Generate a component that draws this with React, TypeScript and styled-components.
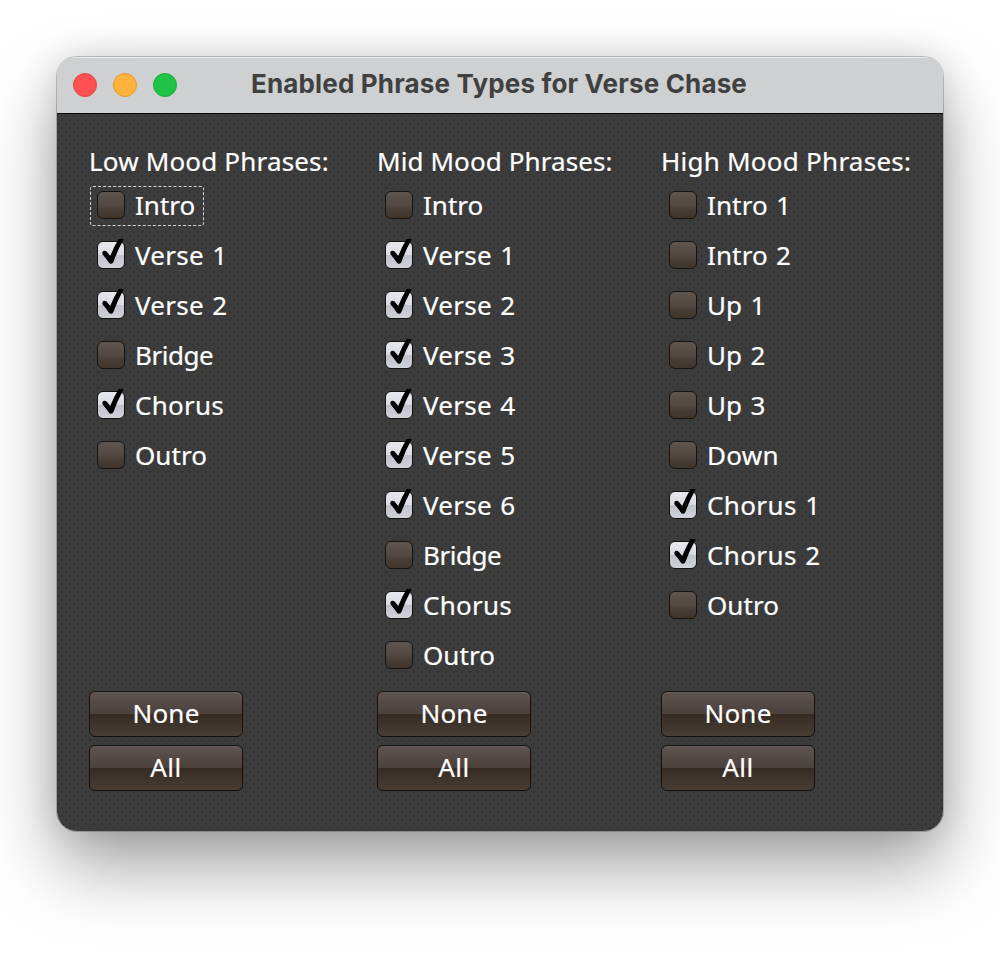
import React, { useState } from "react";
import styled, { createGlobalStyle, css } from "styled-components";

const GlobalStyle = createGlobalStyle`
  * { box-sizing: border-box; }
  html, body { margin: 0; padding: 0; background: #fff; }
  body { width: 1000px; height: 960px; overflow: hidden; }
`;

const Desktop = styled.main`
  width: 1000px;
  height: 960px;
  padding: 57px;
  overflow: hidden;
  background: #fff;
`;

const Window = styled.section`
  width: 886px;
  height: 774px;
  border-radius: 20px;
  overflow: hidden;
  display: flex;
  flex-direction: column;
  box-shadow:
    0 0 0 1px rgba(0, 0, 0, 0.2),
    0 36px 72px rgba(0, 0, 0, 0.36),
    0 0 36px rgba(0, 0, 0, 0.14);
`;

const TitleBar = styled.header`
  height: 57px;
  flex: none;
  display: grid;
  grid-template-columns: 178px 1fr;
  align-items: center;
  padding-left: 16px;
  background: #ced0d1;
  border-bottom: 1px solid #080808;
  box-shadow: inset 0 2px 0 -1px #ececec;
`;

const Lights = styled.div`
  display: flex;
  gap: 16px;
`;

const Light = styled.span<{ $fill: string; $edge: string }>`
  width: 24px;
  height: 24px;
  border-radius: 50%;
  background: ${(p) => p.$fill};
  border: 1px solid ${(p) => p.$edge};
`;

const Title = styled.h1`
  margin: 0 0 2px;
  font: 700 26px/32px Inter, sans-serif;
  letter-spacing: 0.16px;
  color: #404040;
  white-space: nowrap;
`;

const Panel = styled.div`
  flex: 1;
  padding: 31px 32px 0;
  display: grid;
  grid-template-columns: 288px 284px 1fr;
  color: #fff;
  font: 400 26px/32px "Noto Sans", sans-serif;
  -webkit-text-stroke: 0.2px #fff;
  background-color: #3c3c3c;
  background-image:
    radial-gradient(circle, #343434 0.6px, transparent 1.6px),
    radial-gradient(circle, #343434 0.6px, transparent 1.6px);
  background-size: 8px 8px;
  background-position: 1px 2px, 5px 6px;
`;

const Column = styled.div`
  display: flex;
  flex-direction: column;
  align-items: flex-start;
`;

const Heading = styled.h2<{ $track: number }>`
  margin: 0;
  height: 41px;
  font: inherit;
  white-space: nowrap;
  letter-spacing: ${(p) => p.$track}px;
`;

const Options = styled.div`
  height: 505px;
  display: flex;
  flex-direction: column;
  align-items: flex-start;
  gap: 10px;
`;

const Option = styled.button<{ $focused: boolean }>`
  height: 40px;
  margin-left: 1px;
  padding: 0 8px 2px 6px;
  display: flex;
  align-items: center;
  gap: 10px;
  border: 1px dashed ${(p) => (p.$focused ? "#d5d5d5" : "transparent")};
  border-radius: 3px;
  background: none;
  color: inherit;
  font: inherit;
  white-space: nowrap;
  outline: none;
`;

const Box = styled.span<{ $checked: boolean }>`
  flex: none;
  width: 28px;
  height: 28px;
  border: 1px solid #16120f;
  border-radius: 6px;
  ${(p) =>
    p.$checked
      ? css`
          background: linear-gradient(#e6e8ed 0%, #dadce1 49%, #bfc2c8 51%, #d0d3da 100%);
        `
      : css`
          background: linear-gradient(#5f554f 0%, #534842 50%, #453b32 75%, #40352b 100%);
        `}
`;

const Tick = styled.svg`
  display: block;
  overflow: visible;
`;

const Caption = styled.span<{ $track: number }>`
  letter-spacing: ${(p) => p.$track}px;
  word-spacing: 1.4px;
`;

const Actions = styled.div`
  display: flex;
  flex-direction: column;
  gap: 8px;
`;

const Action = styled.button<{ $track: number }>`
  width: 154px;
  height: 46px;
  padding: 0 0 3px;
  border: 1px solid #130e0a;
  border-radius: 6px;
  background: linear-gradient(#5f544f 0%, #4a413c 50%, #372c24 51%, #483d34 100%);
  box-shadow: inset 0 1px 1px #69605b;
  color: #fff;
  font: inherit;
  letter-spacing: ${(p) => p.$track}px;
`;

const tracking: Record<string, number> = {
  Intro: 0,
  Verse: 0.25,
  Bridge: -0.45,
  Chorus: 0.25,
  Outro: 0.05,
  Up: 0.1,
  Down: 0.3,
};

const trackFor = (label: string) => {
  const [word, number] = label.split(" ");
  const extra = number && (word === "Chorus" || word === "Intro") ? 0.12 : 0;
  return tracking[word] + extra;
};

const groups = [
  {
    title: "Low Mood Phrases:",
    track: 0.17,
    items: ["Intro", "Verse 1", "Verse 2", "Bridge", "Chorus", "Outro"],
    on: ["Verse 1", "Verse 2", "Chorus"],
  },
  {
    title: "Mid Mood Phrases:",
    track: 0.1,
    items: ["Intro", "Verse 1", "Verse 2", "Verse 3", "Verse 4", "Verse 5", "Verse 6", "Bridge", "Chorus", "Outro"],
    on: ["Verse 1", "Verse 2", "Verse 3", "Verse 4", "Verse 5", "Verse 6", "Chorus"],
  },
  {
    title: "High Mood Phrases:",
    track: 0.25,
    items: ["Intro 1", "Intro 2", "Up 1", "Up 2", "Up 3", "Down", "Chorus 1", "Chorus 2", "Outro"],
    on: ["Chorus 1", "Chorus 2"],
  },
];

export default function App() {
  const [enabled, setEnabled] = useState(groups.map((g) => g.on));
  const update = (index: number, next: string[]) =>
    setEnabled((all) => all.map((list, i) => (i === index ? next : list)));

  return (
    <>
      <GlobalStyle />
      <Desktop>
        <Window>
          <TitleBar>
            <Lights>
              <Light $fill="#ff5052" $edge="#e04548" />
              <Light $fill="#ffb23c" $edge="#e3952f" />
              <Light $fill="#1fc447" $edge="#18a83a" />
            </Lights>
            <Title>Enabled Phrase Types for Verse Chase</Title>
          </TitleBar>
          <Panel>
            {groups.map((group, g) => (
              <Column key={group.title}>
                <Heading $track={group.track}>{group.title}</Heading>
                <Options>
                  {group.items.map((item, i) => {
                    const checked = enabled[g].includes(item);
                    return (
                      <Option
                        key={item}
                        role="checkbox"
                        aria-checked={checked}
                        $focused={g === 0 && i === 0}
                        onClick={() =>
                          update(g, checked ? enabled[g].filter((x) => x !== item) : [...enabled[g], item])
                        }
                      >
                        <Box $checked={checked}>
                          {checked && (
                            <Tick width="26" height="26" viewBox="0 0 26 26">
                              <path
                                d="M4.6 12.4 Q3.6 10.2 5.4 9 Q7.2 8 8.8 9.8 L12.2 14 Q15.8 5 20.6 -3 L25.8 -3 Q19.5 8.5 15.4 20 Q14.6 22 13 21.8 Q11.6 21.8 10.8 20.4 Q7.5 15.5 4.6 12.4 Z"
                                fill="#000"
                              />
                            </Tick>
                          )}
                        </Box>
                        <Caption $track={trackFor(item)}>{item}</Caption>
                      </Option>
                    );
                  })}
                </Options>
                <Actions>
                  <Action $track={0.2} onClick={() => update(g, [])}>None</Action>
                  <Action $track={0.5} onClick={() => update(g, group.items)}>All</Action>
                </Actions>
              </Column>
            ))}
          </Panel>
        </Window>
      </Desktop>
    </>
  );
}
